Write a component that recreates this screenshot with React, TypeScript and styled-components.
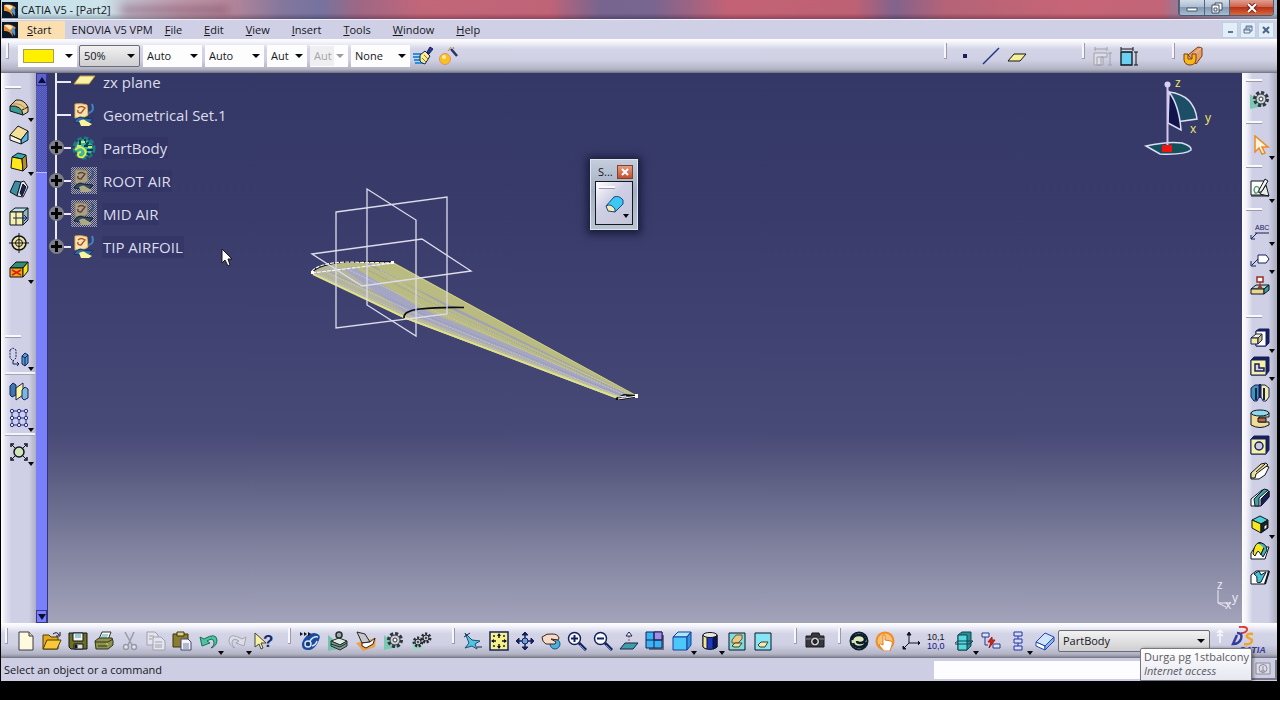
import React from "react";
import styled, { createGlobalStyle, css } from "styled-components";

const Global = createGlobalStyle`
  * { box-sizing: border-box; }
  html, body { margin: 0; background: #fff; }
  body, button, input, select {
    font-family: "Open Sans", "Noto Sans", sans-serif;
    font-size: 11px;
    line-height: 16px;
    color: #16161c;
  }
  button, select, input { margin: 0; padding: 0; border: 0; background: none; border-radius: 0; }
`;

/* ---------- page frame ---------- */

const Page = styled.div`
  min-height: 100vh;
  padding-bottom: 20px;
  display: flex;
`;

const Screen = styled.div`
  flex: 1;
  min-width: 0;
  display: flex;
  flex-direction: column;
  background: #000;
  padding: 0 3px 19px 1px;
`;

const TitleBar = styled.header`
  height: 19px;
  display: flex;
  align-items: center;
  gap: 3px;
  padding-left: 1px;
  background:
    linear-gradient(180deg, rgba(255, 255, 255, 0.15) 0 70%, rgba(60, 60, 80, 0.3) 100%),
    linear-gradient(90deg, #b9dbe6 0, #c3dfe8 8%, #b9b4c4 10%, #b4899c 14%, #a87188 18%, #6f5f8c 22%, #5d5b8e 25%, #8d4d70 28%, #b74b62 33%, #b44860 43%, #5f4a7c 47%, #604a7d 51%, #b9475d 57%, #b2455c 67%, #6d4878 70%, #a8485f 74%, #bd4a5e 84%, #b74a60 91%, #8e5e7c 92%, #96a5bc 100%);
  overflow: hidden;
`;

const TitleText = styled.h1`
  margin: 0;
  flex: 1;
  font-size: 11px;
  font-weight: 400;
  line-height: 16px;
  display: flex;
  gap: 10px;
`;

const GhostTitle = styled.span`
  width: 108px;
  height: 8px;
  margin-top: 4px;
  background: rgba(110, 60, 90, 0.45);
  filter: blur(4px);
`;

const WindowButtons = styled.div`
  align-self: flex-start;
  display: flex;
  margin-right: 3px;
  border: 1px solid #4a5a70;
  border-top: 0;
  border-radius: 0 0 4px 4px;
  overflow: hidden;
`;

const WindowButton = styled.button<{ $close?: boolean }>`
  width: ${(p) => (p.$close ? 44 : 25)}px;
  height: 15px;
  display: grid;
  place-items: center;
  border-left: 1px solid #53657c;
  background: ${(p) =>
    p.$close
      ? "linear-gradient(180deg, #e0a090 0, #cf6450 45%, #b83218 50%, #d8693c 100%)"
      : "linear-gradient(180deg, #d0dbe8 0, #aebfd2 45%, #8499b4 50%, #a6bdd2 100%)"};
`;

const MenuBar = styled.nav`
  height: 20px;
  display: flex;
  align-items: center;
  background: #cfd0e5;
  border-top: 1px solid #eef0f8;
  padding: 0 3px 0 1px;
`;

const MenuItem = styled.button<{ $active?: boolean; $wide?: boolean }>`
  height: 18px;
  padding: ${(p) => (p.$active ? "0 13px 0 9px" : p.$wide ? "0 1px 0 7px" : "0 11px")};
  background: ${(p) => (p.$active ? "#fbdfb0" : "transparent")};
  white-space: nowrap;
  &::first-letter { text-decoration: ${(p) => (p.$wide ? "none" : "underline")}; }
`;

const DocButtons = styled.div`
  margin-left: auto;
  display: flex;
  gap: 2px;
`;

const DocButton = styled.button`
  width: 16px;
  height: 16px;
  display: grid;
  place-items: center;
  background: #e3eef8;
  border: 1px solid #b9d3e6;
`;

/* ---------- tool bars ---------- */

const barPaint = css`
  background: linear-gradient(180deg, #ffffff 0, #f4f4fb 9%, #d3d4e6 30%, #cfd0e3 62%, #b3b4c6 88%, #9c9dab 94%, #6f7080 100%);
`;

const ToolBar = styled.div`
  height: 34px;
  display: flex;
  align-items: center;
  padding-left: 5px;
  ${barPaint}
`;

const BottomBar = styled(ToolBar)`
  height: 35px;
  padding-left: 4px;
`;

const Group = styled.div<{ $lead?: number; $push?: boolean; $tail?: number }>`
  display: flex;
  align-items: center;
  gap: 5px;
  margin-left: ${(p) => (p.$push ? "auto" : `${p.$lead ?? 0}px`)};
  margin-right: ${(p) => p.$tail ?? 0}px;
`;

const Cells = styled.div<{ $inset?: boolean }>`
  display: flex;
  align-items: center;
  padding-left: ${(p) => (p.$inset ? 4 : 0)}px;
`;

const Grip = styled.span`
  width: 3px;
  height: 16px;
  align-self: flex-start;
  background: #f6f6fc;
  border-right: 1px solid #9a9aac;
  border-bottom: 1px solid #9a9aac;
`;

const ToolButton = styled.button<{ $width: number; $height: number }>`
  position: relative;
  flex: none;
  width: ${(p) => p.$width}px;
  height: ${(p) => p.$height}px;
  display: grid;
  place-items: center;
`;

const MenuMark = styled.span`
  position: absolute;
  right: -1px;
  bottom: -1px;
  border: 3px solid transparent;
  border-top: 4px solid #08080c;
  border-bottom: 0;
`;

const Field = styled.label<{ $width: number; $boxed?: boolean; $gap?: number }>`
  display: grid;
  grid-template-columns: 1fr;
  align-items: center;
  width: ${(p) => p.$width}px;
  height: 22px;
  margin-right: ${(p) => p.$gap ?? 3}px;
  background: ${(p) => (p.$boxed ? "linear-gradient(180deg, #f2f2f2, #cfcfd2)" : "#fdfdfe")};
  border: ${(p) => (p.$boxed ? "1px solid #6c6c74" : "0")};
  border-radius: ${(p) => (p.$boxed ? 2 : 0)}px;
  &::after {
    content: "";
    grid-area: 1 / 1;
    justify-self: end;
    margin-right: 4px;
    border: 4px solid transparent;
    border-top-color: #08080c;
    border-bottom: 0;
    pointer-events: none;
  }
  &:has(:disabled)::after { border-top-color: #9c9ca4; }
`;

const Select = styled.select`
  grid-area: 1 / 1;
  appearance: none;
  width: calc(100% - 14px);
  height: 20px;
  padding-left: 4px;
  outline: none;
  text-overflow: clip;
  &:disabled { color: #a4a4ac; background: #efeff2; opacity: 1; }
`;

const Swatch = styled.button`
  grid-area: 1 / 1;
  width: 31px;
  height: 14px;
  margin-left: 5px;
  background: #fff000;
  border: 1px solid #a8a04a;
`;

/* ---------- work area ---------- */

const Work = styled.main`
  flex: 1;
  display: flex;
  min-height: 0;
`;

const SideBar = styled.div<{ $right?: boolean }>`
  flex: none;
  width: 35px;
  display: flex;
  flex-direction: column;
  align-items: flex-start;
  padding: ${(p) => (p.$right ? "6px 0 0 4px" : "13px 0 0 4px")};
  background: ${(p) =>
    p.$right
      ? "linear-gradient(90deg, #fff 0, #f0f0f8 14%, #cfd0e5 30%, #cfd0e5 75%, #a9aabd 100%)"
      : "linear-gradient(90deg, #fff 0, #e4e4f1 14%, #cfd0e5 30%, #cfd0e5 80%, #aeafc2 100%)"};
`;

const SideGrip = styled.span<{ $lead?: number; $after?: number }>`
  width: 16px;
  height: 3px;
  margin: ${(p) => p.$lead ?? 0}px 0 ${(p) => p.$after ?? 5}px;
  background: #fafafd;
  border-bottom: 1px solid #9a9aac;
`;

const SideRule = styled.span`
  width: 30px;
  height: 3px;
  margin: 2px 0;
  background: #f3f3fa;
  border-bottom: 1px solid #a5a5b8;
`;

const ScrollBar = styled.div`
  flex: none;
  width: 12px;
  display: flex;
  flex-direction: column;
  background: #7a80fb;
  border-right: 1px solid #30347c;
`;

const ScrollButton = styled.button<{ $end?: boolean }>`
  height: 13px;
  margin-top: ${(p) => (p.$end ? "auto" : 0)};
  display: grid;
  place-items: center;
  background: ${(p) => (p.$end ? "#7a80fb" : "#5c61cf")};
  border: 1px solid #34388c;
`;

const Thumb = styled.div`
  height: 87px;
  background: repeating-conic-gradient(#4c51ad 0 25%, #5f65cd 0 50%) 0 0 / 2px 2px;
  border-bottom: 1px solid #b9bcff;
`;

const Canvas = styled.section`
  position: relative;
  flex: 1;
  min-width: 0;
  overflow: hidden;
  background: linear-gradient(180deg, #343866 0, #393c6a 25%, #414372 50%, #474976 65%, #5a5c82 73%, #7c7e9b 85%, #a3a4ba 100%);
`;

/* ---------- specification tree ---------- */

const Tree = styled.ul`
  margin: -8px 0 0;
  padding: 0;
  list-style: none;
`;

const Node = styled.li`
  height: 33px;
  display: flex;
  align-items: center;
  &:last-child > span:first-child { background-size: 2px 50%; }
`;

const Spine = styled.span`
  width: 16px;
  height: 100%;
  display: grid;
  place-items: center;
  background: linear-gradient(#e8e8f6, #e8e8f6) top center / 2px 100% no-repeat;
`;

const Toggle = styled.button`
  width: 15px;
  height: 15px;
  display: grid;
  place-items: center;
  border-radius: 50%;
  background: #7e7f86;
`;

const Stub = styled.span<{ $long?: boolean }>`
  width: ${(p) => (p.$long ? 14 : 7)}px;
  height: 2px;
  margin-left: ${(p) => (p.$long ? -7 : 0)}px;
  background: #e8e8f6;
`;

const NodeIcon = styled.span<{ $dim?: boolean }>`
  width: 26px;
  height: 27px;
  display: grid;
  place-items: center;
  background: ${(p) => (p.$dim ? "repeating-conic-gradient(#a2a3b6 0 25%, #3a3d66 0 50%) 0 0 / 2px 2px" : "none")};
  svg { filter: ${(p) => (p.$dim ? "brightness(0.7) saturate(0.6)" : "none")}; }
`;

const NodeLabel = styled.span<{ $shade?: boolean }>`
  margin-left: 5px;
  padding: 0 1px;
  font-size: 15px;
  line-height: 22px;
  color: #dcdcea;
  background: ${(p) => (p.$shade ? "rgba(44, 47, 98, 0.45)" : "none")};
`;

/* ---------- objects floating on the canvas ---------- */

const Model = styled.svg`
  position: absolute;
  left: 250px;
  top: 107px;
`;

const Compass = styled.svg`
  position: absolute;
  right: 22px;
  top: 0;
`;

const Axes = styled.svg`
  position: absolute;
  right: 0;
  bottom: 10px;
`;

const Pointer = styled.svg`
  position: absolute;
  left: 173px;
  top: 175px;
`;

const Palette = styled.div`
  position: absolute;
  left: 542px;
  top: 86px;
  width: 48px;
  padding: 3px 4px 4px;
  background: linear-gradient(180deg, #c3cddb 0, #a3afc4 45%, #b8c6d2 100%);
  border: 1px solid #dfe6ee;
  box-shadow: 0 1px 8px 3px rgba(16, 18, 46, 0.8);
`;

const PaletteTitle = styled.div`
  height: 18px;
  display: flex;
  align-items: center;
  justify-content: space-between;
  padding-left: 3px;
`;

const PaletteClose = styled.button`
  width: 16px;
  height: 14px;
  display: grid;
  place-items: center;
  background: linear-gradient(180deg, #e79a80, #c4502c);
  border: 1px solid #7c4234;
`;

const PaletteBody = styled.div`
  height: 44px;
  display: flex;
  flex-direction: column;
  align-items: center;
  padding: 4px 3px;
  border: 1px solid #16161c;
  background: linear-gradient(135deg, #fff, #cfd0e5 40%, #c3c4d8);
`;

const PaletteGrip = styled(SideGrip)`
  align-self: flex-start;
`;

/* ---------- bottom ---------- */

const Logo = styled.svg`
  margin-left: auto;
  margin-right: 4px;
  flex: none;
`;

const Status = styled.footer`
  position: relative;
  height: 23px;
  display: flex;
  align-items: center;
  padding-left: 3px;
  background: #cdcee3;
`;

const CommandLine = styled.input`
  width: 234px;
  height: 18px;
  margin-left: auto;
  background: #fdfdff;
`;

const StatusButton = styled.button`
  width: 26px;
  height: 20px;
  margin-left: 83px;
  display: grid;
  place-items: center;
  border-right: 2px solid #77788a;
  border-bottom: 2px solid #77788a;
`;

const Tip = styled.div`
  position: absolute;
  right: 25px;
  bottom: 0;
  padding: 1px 2px 0 3px;
  line-height: 14px;
  height: 33px;
  width: 112px;
  white-space: nowrap;
  color: #5a5a62;
  background: linear-gradient(180deg, #fff, #e6e7f1);
  border: 1px solid #77777f;
  border-radius: 2px 2px 0 0;
  box-shadow: 2px 0 3px rgba(0, 0, 0, 0.35);
  em { display: block; }
`;

/* ---------- drawings ---------- */

const K = "#10141c";
const N = "#17205c";

const art: Record<string, React.ReactNode> = {
  fillet: <g stroke={K}><path d="M1 8 7 2q8-1 12 7v5l-5 3z" fill="#e8c98c" /><path d="M1 8q12-1 13 9L1 13z" fill="#3c9a90" /><path d="M13 12l6-3" /><path d="M4 6q9-1 12 5" stroke="#b88a58" fill="none" /></g>,
  chamfer: <g stroke={K}><path d="M1 10 9 1l10 5-7 9z" fill="#f5e09a" /><path d="M12 15l7-9v9l-7 4z" fill="#57b4e0" /><path d="M1 10v5l11 4v-4z" fill="#f8f4dc" /></g>,
  draft: <g stroke={K}><path d="M3 5 9 1l8 2-4 4z" fill="#35a8b0" /><path d="M3 5l10 2 1 12-12-3z" fill="#ffe81c" /><path d="M13 7l4-4 1 12-4 4z" fill="#b88e20" /></g>,
  shell: <g stroke={K}><path d="M1 13 6 2l6 1-4 14z" fill="#3a90a0" /><path d="M8 17 12 3l3-1 4 6-5 10z" fill="#e8e8f0" /><path d="M11 14l3-9 3 3-4 9z" fill={N} /></g>,
  thickness: <g stroke={K}><path d="M1 6l5-4h13l-5 4z" fill="#bfe0e8" /><path d="M1 6h13v13H1z" fill="#f6f0a8" /><path d="M14 6l5-4v12l-5 5z" fill="#8fb8c8" /><path d="M7 6v13M4 12h14m-3-3 3 3-3 3" fill="none" stroke={N} /></g>,
  thread: <g fill="none" stroke={K}><circle cx="10" cy="10" r="7" fill="#f6e6a0" strokeWidth="1.5" /><circle cx="10" cy="10" r="3.5" /><path d="M10 0v20M0 10h20" /></g>,
  replace: <g stroke={K}><path d="M1 8l6-6h12l-5 6z" fill="#2f8f70" /><path d="M1 8h13v9H1z" fill="#f5a41c" /><path d="M14 8l5-6v9l-5 6z" fill="#f5e41c" /><path d="M3 10l9 5m0-5-9 5" stroke="#d02010" strokeWidth="1.500" /></g>,
  translate: <g stroke={N}><path d="M1 3l3-2 3 2v8l-3 3-3-3z" fill="none" strokeDasharray="2 1" /><path d="M4 14v3h6m-2-2 2 2-2 2" fill="none" /><path d="M13 9l3-3 3 2v8l-3 3-3-2z" fill="#4fa0d0" /><path d="M13 9l3 2 3-3m-3 3v8" fill="none" /></g>,
  mirror: <g stroke={N}><path d="M1 5l3-3 3 2v10l-4 2-2-2z" fill="#3c78a8" /><path d="M7 7l7-5v12l-7 5z" fill="#f8f49c" /><path d="M13 9l3-3 3 2v9l-4 2-2-2z" fill="#7cb8dc" /></g>,
  pattern: <g stroke="#28308c" fill="#dfe6ff"><path d="M3 3h14v14H3zM3 10h14M10 3v14" fill="none" />{[3, 10, 17].map((x) => [3, 10, 17].map((y) => <circle key={`${x}${y}`} cx={x} cy={y} r="1.7" />))}</g>,
  scale: <g stroke={K}><path d="M3 3l14 14M17 3 3 17" /><circle cx="10" cy="10" r="5" fill="#cfe6b8" strokeWidth="1.5" /><path d="M2 5V2h3M15 2h3v3M18 15v3h-3M5 18H2v-3" fill="none" strokeWidth="1.5" /></g>,
  gearLeaf: <g><path d="M0 4v15l14-3z" fill="#7cc8b4" /><circle cx="11" cy="9" r="6.5" fill="none" stroke="#30343c" strokeWidth="3" strokeDasharray="3 2" /><circle cx="11" cy="9" r="5" fill="#d0d4d8" stroke="#30343c" /><circle cx="11" cy="9" r="2" fill="#fff" stroke="#30343c" /></g>,
  gears: <g><path d="M1 8v12l11-3z" fill="#a2d4c6" />{[[6, 11, 4], [14, 7, 4]].map(([x, y, r]) => <g key={x}><circle cx={x} cy={y} r={r} fill="none" stroke="#262a30" strokeWidth="3" strokeDasharray="2 1.5" /><circle cx={x} cy={y} r="3" fill="#c0c4c8" stroke="#262a30" /><circle cx={x} cy={y} r="1" fill="#262a30" /></g>)}</g>,
  select: <path d="M5 1v16l4-4 3 6 3-1-3-6h6z" fill="#fff4dc" stroke="#e88a28" strokeWidth="1.5" />,
  sketch: <g stroke={K}><path d="M1 3h13v14H1z" fill="#fff" /><path d="M1 18h18M14 17l-4-1 6-9 3 11z" fill="#e8eee8" /><path d="M4 12q1-5 4-3t0 5-4-2z" fill="none" stroke="#5aa070" strokeWidth="1.500" /><path d="M9 12 15 1l3 2-6 10-3 2z" fill="#f4f4f4" /></g>,
  flagText: <g stroke={N}><path d="M5 12h14M7 12l-6 6m0-4v4h4" fill="none" /><text x="5" y="9" fontSize="7" fontFamily="Liberation Sans" stroke="none" fill={N}>ABC</text></g>,
  flagNote: <g stroke={N}><path d="M8 6h8l3 4-3 4H8z" fill="#fff" /><path d="M8 10l-6 6m-1-4v5h5" fill="none" /></g>,
  datum: <g stroke={K}><path d="M1 13l5-4h13l-5 4z" fill="#a8dce0" /><path d="M1 13h13v5H1z" fill="#e8d890" /><path d="M14 13l5-4v5l-5 4z" fill="#3ca0a0" /><path d="M7 1h6v5H7z" fill="#fff" stroke="#9c2c20" strokeWidth="1.5" /><path d="M10 6v5M8 12l2-3 2 3z" fill="#d03020" stroke="#9c2c20" /></g>,
  pad: <g stroke={N}><path d="M6 3l3-2h10v14l-3 3H6z" fill={N} /><path d="M6 3h10v15H6z" fill="#fff" /><path d="M1 10l5-4h6l-4 4z" fill="#fff8b0" /><path d="M1 10h7v6H1z" fill="#f3ee9c" /><path d="M8 10l4-4v6l-4 4z" fill="#c8c078" /></g>,
  pocket: <g stroke={N}><path d="M1 4l3-3h15v14l-3 4H1z" fill={N} /><path d="M1 4h15v15H1z" fill="#f7f1a6" /><path d="M5 8h4v4h5v3H5z" fill="#d6d6e2" strokeWidth="1.5" /></g>,
  shaft: <g stroke={N}><path d="M1 5l4-3h4v12l-2 4H4l-3-4z" fill="#3f95b4" /><path d="M19 5l-4-3h-4v12l2 4h3l3-4z" fill="#f4eea0" /><path d="M6 5v12M14 5v12M10 1v14" strokeWidth="2" /></g>,
  groove: <g stroke={K}><path d="M1 4v12q9 5 18 0v-3H9V8h10V4z" fill="#f0dc98" /><ellipse cx="10" cy="4" rx="9" ry="3" fill="#8cd8f0" /><path d="M8 9h8v4H8z" fill="#b86c48" /></g>,
  hole: <g stroke={N}><path d="M1 4l3-3h15v14l-3 4H1z" fill={N} /><path d="M1 4h15v15H1z" fill="#f7f1a6" /><circle cx="9" cy="11" r="4" fill="#c8ccde" strokeWidth="1.5" /></g>,
  rib: <g stroke={K}><path d="M1 12l3 1 11-8 4 1-4 8-6 4H1z" fill="#fff" /><path d="M1 12 11 3l5-1 2 2-12 9-1 4H1z" fill="#e8e09c" /><path d="M6 11l9-8" /></g>,
  slot: <g stroke={K}><path d="M1 12 12 3l7 1v6l-8 9H1z" fill="#fff" /><path d="M4 12 14 2l4 1-9 8v8H5z" fill="#40a0a8" /><path d="M11 19v-7l8-8v6z" fill={N} /></g>,
  stiffener: <g stroke={K}><path d="M2 6l8-4 8 4-7 4z" fill="#4cd0d8" /><path d="M2 6l9 4v9l-9-5z" fill="#f7e71f" /><path d="M11 10l7-4v8l-7 5z" fill="#1c2420" /><path d="M14 12l3-2v4l-3 2z" fill="#fff" /></g>,
  loft: <g stroke={K}><path d="M1 12l4-6h14l-4 12H1z" fill="#fff" /><path d="M3 13q1-9 5-11t6 4l-3 8q-2-5-4-3l-2 4z" fill="#f3e820" /><path d="M8 2q8-1 9 7l-4 7-2-3 3-6" fill="#46b4b4" /></g>,
  loftCut: <g stroke={K}><path d="M1 8l5-4h13l-4 13H1z" fill="#fff" /><path d="M4 7q4 2 3 6t4 2l5-10-5 3-2-4z" fill="#44c4dc" /><path d="M15 17l4-13" strokeWidth="2" /></g>,

  fileNew: <g stroke="#3c3c44"><path d="M3 1h10l4 4v14H3z" fill="#fdfae0" /><path d="M13 1v4h4" fill="#dcd8b0" /></g>,
  open: <g stroke="#4c3c08"><path d="M1 4h6l2 2h7v12H1z" fill="#e8a818" /><path d="M1 18l4-9h14l-4 9z" fill="#f8c838" /><path d="M11 3q4-3 6 1m1-3v4h-4" fill="none" stroke={K} /></g>,
  save: <g stroke={K}><path d="M1 2h18v16H3l-2-2z" fill="#6c7020" /><path d="M5 2h10v8H5z" fill="#f4f4f4" /><path d="M6 13h9v5H6z" fill="#dcdcdc" /><path d="M7 4h6M7 6h6" stroke="#44a0b4" /><path d="M7 14h2v3H7z" fill={K} /></g>,
  print: <g stroke="#30341c"><path d="M5 8 8 1h9l-3 8z" fill="#fff" /><path d="M8 4h6M7 6h6" stroke="#48a0c0" /><path d="M1 10l4-3h13l1 3v4l-5 4H2z" fill="#8e9450" /><path d="M1 11h13l5-3M4 15h9" fill="none" /><path d="M12 13h2" stroke="#ffe81c" /></g>,
  cut: <g stroke="#9a9aa6" fill="none" strokeWidth="1.5"><path d="M5 1l7 13M14 1 8 14" /><circle cx="6" cy="16" r="2.5" fill="#e6e6ee" /><circle cx="14" cy="16" r="2.5" fill="#e6e6ee" /></g>,
  copy: <g stroke="#a0a0ac" fill="#e4e4ee"><path d="M1 1h8l3 3v10H1z" /><path d="M7 6h8l4 4v9H7z" /><path d="M9 11h7M9 14h7M9 16h7M3 5h5M3 8h3" /></g>,
  paste: <g stroke="#38340c"><path d="M1 3h15v13H1z" fill="#8c7c30" /><path d="M5 1h7v4H5z" fill="#d8d088" /><path d="M9 8h7l3 3v8H9z" fill="#f4f4ff" stroke="#40446c" /><path d="M11 13h6M11 15h6M11 17h6" stroke="#7478a0" /></g>,
  undo: <path d="M1 6l2 9 8-3-3-2q6-4 7 1 1 3-3 6 6-2 6-8Q17 1 5 8z" fill="#4cc4a0" stroke="#1c6c58" />,
  redo: <path d="M19 6l-2 9-8-3 3-2Q6 6 5 11q-1 3 3 6-6-2-6-8Q3 1 15 8z" fill="#dedee8" stroke="#a4a4b0" />,
  help: <g><path d="M1 2v14l4-3 2 5 2-1-2-5h5z" fill="#f7f2a0" stroke="#444" /><text x="9" y="16" fontSize="17" fontWeight="700" fontFamily="Liberation Sans" fill="#122c6c">?</text></g>,
  enovia: <g><path d="M2 12Q6 2 14 2q8 1 5 7-3 8-9 10-9 1-8-7z" fill="#1c4a9c" /><circle cx="8" cy="13" r="3" stroke="#d8e4f4" strokeWidth="1.500" fill="#14387c" /><path d="M10 10q3-5 8-4M12 15q4-1 5-5" stroke="#d8e4f4" strokeWidth="1.500" fill="none" /><path d="M0 1l3 2-3 2zM4 1l3 2-3 2zM8 1l3 2-3 2z" fill={K} /></g>,
  catalog: <g stroke="#20302c"><path d="M0 4v16l16-3z" fill="#78c0ac" stroke="none" /><path d="M3 10l8-3 8 3-7 4z" fill="#e0e8e4" /><path d="M3 10v5l9 4 7-4v-5l-7 4z" fill="#7c988c" /><path d="M3 13l9 3 7-4" fill="none" /><circle cx="11" cy="4" r="3" fill="#a0a8a8" strokeWidth="1.5" /></g>,
  box: <g stroke="#2c2420"><path d="M0 12l7 8 12-4 1-9z" fill="#f0a048" stroke="none" /><path d="M1 1l8 2 5 8-8 1z" fill="#c8c8cc" /><path d="M6 12l8-1 5-4-2 6-7 4-4-2z" fill="#fff" /></g>,
  fly: <g stroke="#1c5070" fill="#54c4e4"><path d="M2 2l7 7 8 1-5 3 2 5-5-3-7 2 4-5z" /><path d="M1 6l6-4M14 16h5" stroke={N} /></g>,
  fit: <g><path d="M1 1h18v18H1z" fill="#f4f08c" stroke={N} strokeWidth="1.5" /><path d="M10 3v4M10 17v-4M3 10h4M17 10h-4" stroke={K} strokeWidth="1.500" /><path d="M8 5l2-3 2 3zM8 15l2 3 2-3zM5 8l-3 2 3 2zM15 8l3 2-3 2z" fill={K} /><path d="M4 4h2v2H4zM14 4h2v2h-2zM4 14h2v2H4zM14 14h2v2h-2z" fill="#54543c" /></g>,
  pan: <g stroke={N} fill={N}><path d="M10 1v18M1 10h18" strokeWidth="1.5" /><path d="M7 4l3-3 3 3zM7 16l3 3 3-3zM4 7l-3 3 3 3zM16 7l3 3-3 3z" /><circle cx="10" cy="10" r="3" fill="#6ca0d8" /></g>,
  rotate: <g stroke="#3c241c"><circle cx="14" cy="13" r="5" fill="#4cb0dc" stroke="#1c5080" /><path d="M1 6q5-4 10-3 6 0 7 4l-1 2-7-1 5 3-1 2H5q-4-2-4-7z" fill="#f6dcc8" /></g>,
  zoomIn: <g stroke={N}><circle cx="7.500" cy="7.500" r="6" fill="#f6fbff" strokeWidth="1.500" /><path d="M12 12l7 7" strokeWidth="3" /><path d="M13 14l5 5" stroke="#5c90c0" /><path d="M4 7.500h7M7.500 4v7" strokeWidth="2" /></g>,
  zoomOut: <g stroke={N}><circle cx="7.500" cy="7.500" r="6" fill="#f6fbff" strokeWidth="1.500" /><path d="M12 12l7 7" strokeWidth="3" /><path d="M13 14l5 5" stroke="#5c90c0" /><path d="M4 7.500h7" strokeWidth="2" /></g>,
  normal: <g stroke={N}><path d="M1 18l5-6h13l-5 6z" fill="#3fa0a4" /><path d="M10 13V4" strokeDasharray="2 1" stroke="#a04838" /><path d="M7 5l3-4 3 4z" fill="#fff" /></g>,
  multi: <g stroke={N}><path d="M4 4h15v15H4z" fill="#6c6c80" stroke="none" /><path d="M1 1h16v16H1z" fill="#38b4f0" /><path d="M9 1h8v8H9z" fill="#a48ce0" /><path d="M9 1v16M1 9h16" /></g>,
  iso: <g stroke="#1c3c9c"><path d="M1 6l5-5h13l-4 5z" fill="#a8e8fc" /><path d="M1 6h14v13H1z" fill="#4cc8f8" /><path d="M15 6l4-5v13l-4 5z" fill="#2898e0" /></g>,
  shading: <g stroke={K}><path d="M3 4v12q7 5 14 0V4z" fill="#1c38c8" /><path d="M3 4v12q2 2 4 2V5z" fill="#f0e898" /><path d="M13 5v13q3-1 4-2V4z" fill="#0c1468" /><ellipse cx="10" cy="4" rx="7" ry="2.500" fill="#e8e8e0" /></g>,
  hideShow: <g stroke={K}><path d="M2 2h16v17H2z" fill="#7cdce4" /><path d="M5 9l4-5h6v4l-4 4H5z" fill="#e8c888" stroke="#6c5430" /><path d="M5 15l3-3h7l-3 4H7z" fill="#e8e098" stroke="#44401c" /></g>,
  swap: <g stroke={K}><path d="M2 2h16v17H2z" fill="#84e4f8" /><path d="M5 14l3-3h7l-3 5H7z" fill="#f0e8b8" stroke="#44401c" /></g>,
  camera: <g stroke="#18181c"><path d="M1 5h5l1-3h7l1 3h4v11H1z" fill="#38383e" /><path d="M1 8h18" stroke="#8c8c94" /><circle cx="10" cy="10.500" r="4.500" fill="#d0d0d8" /><circle cx="10" cy="10.500" r="2" fill="#28282c" /></g>,
  update: <g fill="none" stroke="#0c1c2c"><circle cx="10" cy="10" r="8.500" fill="#dce8b8" strokeWidth="2" /><path d="M3 9q1-5 7-5 5 0 6 4 0 4-5 4-3 0-3-2M17 11q-1 5-7 5-5 0-6-4" strokeWidth="2.500" /></g>,
  manual: <g><circle cx="10" cy="10" r="8.500" fill="#f8c078" stroke="#f08c20" strokeWidth="2" /><path d="M8 4q2-1 2 1v4l6 1q2 1 1 4l-2 6H9l-5-6q1-2 4 0z" fill="#fff" stroke="#e08020" /></g>,
  axis: <g stroke={K} fill={K}><path d="M8 2v10h11M8 12l-6 6" fill="none" /><path d="M6 4l2-3 2 3zM17 10l2 2-2 2M2 15v3h3z" /></g>,
  mean: <g fontFamily="Liberation Sans" fontSize="9" fill={K}><text x="0" y="9">10,1</text><text x="0" y="18" fill="#14148c">10,0</text></g>,
  cutPart: <g stroke="#0c4450"><path d="M4 4l4-3h9v14l-4 4H4z" fill="#2c8c94" /><path d="M4 4h9v15H4z" fill="#58d8dc" /><path d="M1 12l3-2h15l-3 3H1" fill="none" /></g>,
  link: <g stroke="#28388c"><path d="M1 2h7v4H1z" fill="#dce4fc" /><path d="M12 13h7v4h-7z" fill="#dce4fc" /><path d="M4 6v8h3" fill="none" /><path d="M11 6l-4 5h3l-2 6 6-8h-3z" fill="#d82418" stroke="#a81810" /></g>,
  stack: <g stroke="#2434a0" fill="#d4dcfc"><path d="M6 1h8v4H6zM6 8h8v4H6zM6 15h8v4H6zM10 5v3M10 12v3" /></g>,
  book: <g stroke="#2444b0"><path d="M1 11l9-9 9 4-9 9z" fill="#d0e4fc" /><path d="M1 11v4l9 4v-4z" fill="#fff" /><path d="M10 15v4l9-9V6z" fill="#8cb8e8" /></g>,

  brush: <g stroke={N}><path d="M0 8h10M0 11h9M1 14h8M2 17h9" stroke="#2c90d8" strokeWidth="2" /><path d="M7 9l5-4 5 5-5 8q-4-1-5-3z" fill="#f7ec90" /><path d="M9 12l4 4M11 9l4 4" stroke="#8c7c30" /><path d="M14 6l3-5 3 2-4 5z" fill="#28388c" /></g>,
  wizard: <g><circle cx="6" cy="13" r="5.500" fill="#f8c020" stroke="#e88c6c" /><circle cx="5" cy="11" r="2" fill="#fff29a" /><path d="M12 3l6 7" stroke="#28306c" strokeWidth="2.500" /><path d="M9 5l3-4M14 1l1 2" stroke="#b48830" /></g>,
  point: <path d="M8 8h4v4H8z" fill={N} />,
  line: <path d="M2 18 18 2" stroke="#1c3484" strokeWidth="1.500" />,
  plane: <path d="M1 15l6-7h12l-6 7z" fill="#f8f094" stroke={K} />,
  dimOff: <g stroke="#a0a0aa" fill="#dedee8"><path d="M2 3h12M2 1v4M14 1v4" fill="none" /><path d="M1 7h13v4H8v8H1zM4 11h6v8H4z" /><path d="M17 7v12M15 7h4M15 19h4" fill="none" /></g>,
  dim: <g stroke={K}><path d="M2 3h12M2 1v4M14 1v4M17 6v13M15 6h4M15 19h4" fill="none" /><path d="M2 6h11v13H2z" fill="#6cd0f0" strokeWidth="1.300" /></g>,
  stock: <g stroke="#7c3c10"><path d="M5 9l10-8 4 1v8l-6 8z" fill="#e4a070" /><path d="M9 10l9-8" stroke="#f4c8a0" /><path d="M1 8h4v5h4V8h4v6q-1 5-6 5t-6-5z" fill="#f8b818" /></g>,
  thickSurface: <g stroke="#14487c"><path d="M2 12 10 3q5-2 9 3v4l-8 8z" fill="#3cc8f4" /><path d="M2 12q5-3 9 3v3L4 17z" fill="#f7eab0" /></g>,
};

const treeArt: Record<string, React.ReactNode> = {
  plane: <path d="M2 14 8 6h15l-6 8z" fill="#f7f2a8" stroke="#c09a30" />,
  geoset: (
    <g>
      <path d="M3 1q7-1 12 1l1 10q-3 3-8 2l-5 1z" fill="#f6e4b0" stroke="#e2b04c" />
      <path d="M6 5q3-3 7 0l-4 5q-4 0-3-3" fill="none" stroke="#b0502c" strokeWidth="1.500" />
      <path d="M20 1q3 7-3 9" fill="none" stroke="#3c84c8" strokeWidth="2" />
      <path d="M2 19q5-7 9-4l10 1-4 4q-6-3-9 0z" fill="#2f6ea4" stroke="#16306c" />
      <path d="M7 18q5-3 7 0l6 3-3 2H9z" fill="#fbf49c" />
    </g>
  ),
  body: (
    <g>
      <circle cx="12" cy="12" r="9" fill="#37b2a0" stroke="#1c7c84" strokeWidth="5" strokeDasharray="4 2" />
      <circle cx="12" cy="12" r="8" fill="#3cb8a0" />
      <path d="M8 4v5M13 3v4M17 6l-3 3M12 10h8M15 14h6M14 17l4 2" stroke="#0c3c54" strokeWidth="2" />
      <path d="M3 14q5-5 9-1t-1 8q-4 1-5-2 0-3 3-3" fill="none" stroke="#e4ea48" strokeWidth="2" />
      <path d="M9 6h4M16 11h4M5 10h4" stroke="#c8ec70" strokeWidth="2" />
    </g>
  ),
};

const AppBadge = () => (
  <svg width="16" height="16" viewBox="0 0 16 16" aria-hidden="true">
    <path d="M0 0h16v16H0z" fill="#0c1828" />
    <path d="M2 3q8-2 12 3l-4 3 1 6Q8 8 2 9z" fill="#e88c34" />
    <path d="M2 3q6-1 9 2l-3 3z" fill="#fbe8b4" />
    <path d="M11 5q3 2 2 9l-4-5z" fill="#4894d4" />
  </svg>
);

type Tool = { id: string; label: string; menu?: boolean };
const t = (id: string, label: string, menu = false): Tool => ({ id, label, menu });

type Placement = "bar" | "wideBar" | "left" | "right";

const cellSize = (place: Placement, menu?: boolean): [number, number] => {
  if (place === "left") return [28, 27];
  if (place === "right") return [28, menu ? 28 : 26];
  if (place === "wideBar") return [28, 26];
  return [menu ? 28 : 26, 26];
};

const Tools = ({ items, place = "bar" }: { items: Tool[]; place?: Placement }) => (
  <>
    {items.map((i) => {
      const [w, h] = cellSize(place, i.menu);
      return (
        <ToolButton key={i.id} aria-label={i.label} title={i.label} $width={w} $height={h}>
          <svg width="20" height="20" viewBox="0 0 20 20" fill="none" aria-hidden="true">
            {art[i.id]}
          </svg>
          {i.menu && <MenuMark />}
        </ToolButton>
      );
    })}
  </>
);

const Combo = ({ label, value, width, boxed, disabled, gap }: { label: string; value: string; width: number; boxed?: boolean; disabled?: boolean; gap?: number }) => (
  <Field $width={width} $boxed={boxed} $gap={gap}>
    <Select aria-label={label} disabled={disabled} defaultValue={value}>
      <option>{value}</option>
    </Select>
  </Field>
);

const dressUp = [t("fillet", "Edge Fillet", true), t("chamfer", "Chamfer"), t("draft", "Draft Angle", true), t("shell", "Shell"), t("thickness", "Thickness"), t("thread", "Thread"), t("replace", "Replace Face", true)];
const sketchBased = [t("pad", "Pad", true), t("pocket", "Pocket", true), t("shaft", "Shaft"), t("groove", "Groove"), t("hole", "Hole"), t("rib", "Rib"), t("slot", "Slot"), t("stiffener", "Stiffener", true), t("loft", "Multi-sections Solid"), t("loftCut", "Removed Multi-sections Solid")];

const nodes = [
  { name: "zx plane", icon: "plane" },
  { name: "Geometrical Set.1", icon: "geoset" },
  { name: "PartBody", icon: "body", open: true },
  { name: "ROOT AIR", icon: "geoset", open: true, dim: true },
  { name: "MID AIR", icon: "geoset", open: true, dim: true },
  { name: "TIP AIRFOIL", icon: "geoset", open: true },
];

const Wing = () => (
  <Model width="350" height="230" viewBox="298 180 350 230" fill="none" role="img" aria-label="Wing surface with reference planes">
    <path d="M312 273Q320 263 345 262L393 262 637 396 618 399 406 319z" fill="#b9bb80" />
    <path d="M312 273Q318 266 335 264L404 308 630 397 618 399 406 319z" fill="#b4b59c" />
    <path d="M342 268 354 267 420 308 632 396 626 398 404 312z" fill="#a5a6c4" />
    <path d="M366 264 370 264 455 311 634 396z" fill="#a0a1b4" />
    <path d="M318 274 408 316 622 398M326 272 412 312 624 398M345 268 430 309 630 397M380 270 440 308 634 396" stroke="#c6c7bc" strokeDasharray="2 1" />
    <path d="M330 272 420 313 628 398M360 266 450 312 632 397" stroke="#9496b4" strokeDasharray="1 1" />
    <path d="M313 274 406 318 618 398" stroke="#dfe18c" strokeWidth="2" />
    <path d="M393 263 637 396" stroke="#cdd082" />
    <path d="M312 272Q320 264 345 262L393 262" stroke="#0c0c10" strokeWidth="1.300" />
    <path d="M312 271Q320 263 345 262L393 263M312 273 393 263" stroke="#f4f4fa" strokeWidth="1.200" strokeDasharray="4 1" />
    <path d="M404 318Q403 311 420 309T464 307.500" stroke="#0c0c10" strokeWidth="1.700" />
    <path d="M616 399 624 395 637 396 621 399z" stroke="#0c0c10" strokeWidth="2" />
    <path d="M618 399 637 396M618 397 626 396" stroke="#fff" />
    <path d="M391 261h3v3h-3zM635 394h3v4h-3zM311 271h3v3h-3z" fill="#fff" />
    <g stroke="#dcdcec" strokeWidth="1.300">
      <path d="M336 212 447 197V314L336 328z" />
      <path d="M367 189 416 220V336L367 305z" />
      <path d="M312 254 422 239 471 271 362 286z" />
    </g>
  </Model>
);

export default function App() {
  return (
    <>
      <Global />
      <Page>
        <Screen>
          <TitleBar>
            <AppBadge />
            <TitleText>
              CATIA V5 - [Part2]
              <GhostTitle />
            </TitleText>
            <WindowButtons>
              <WindowButton aria-label="Minimize">
                <svg width="12" height="10"><path d="M1 5h10v3H1z" fill="#fff" stroke="#46566c" /></svg>
              </WindowButton>
              <WindowButton aria-label="Restore">
                <svg width="12" height="12" fill="#fff" stroke="#3c4c60"><path d="M4 1h7v7H4z" /><path d="M1 3h7v8H1z" /><path d="M3 6h3v3H3z" /></svg>
              </WindowButton>
              <WindowButton $close aria-label="Close">
                <svg width="12" height="10"><path d="M2 1l8 8M10 1 2 9" stroke="#70281c" strokeWidth="4" /><path d="M2 1l8 8M10 1 2 9" stroke="#fff" strokeWidth="2" /></svg>
              </WindowButton>
            </WindowButtons>
          </TitleBar>

          <MenuBar>
            <AppBadge />
            <MenuItem $active>Start</MenuItem>
            <MenuItem $wide>ENOVIA V5 VPM</MenuItem>
            {["File", "Edit", "View", "Insert", "Tools", "Window", "Help"].map((m) => (
              <MenuItem key={m}>{m}</MenuItem>
            ))}
            <DocButtons>
              <DocButton aria-label="Minimize document">
                <svg width="8" height="8"><path d="M2 6h5" stroke="#5c7494" strokeWidth="2" /></svg>
              </DocButton>
              <DocButton aria-label="Restore document">
                <svg width="10" height="10" fill="none" stroke="#5c7494"><path d="M3 4V1h6v5H7M1 4h6v4H1zM1 5h6M3 2h6" /></svg>
              </DocButton>
              <DocButton aria-label="Close document">
                <svg width="8" height="8"><path d="M1 1l6 6M7 1 1 7" stroke="#4c6484" strokeWidth="2" /></svg>
              </DocButton>
            </DocButtons>
          </MenuBar>

          <ToolBar>
            <Group>
              <Grip />
              <Cells $inset>
                <Field $width={59} $gap={2}>
                  <Swatch aria-label="Fill colour" />
                </Field>
                <Combo label="Transparency" value="50%" width={61} boxed />
                <Combo label="Line thickness" value="Auto" width={59} />
                <Combo label="Line type" value="Auto" width={59} />
                <Combo label="Point symbol" value="Aut" width={40} />
                <Combo label="Rendering style" value="Aut" width={38} disabled />
                <Combo label="Layer" value="None" width={59} gap={0} />
                <Tools items={[t("brush", "Painter"), t("wizard", "Wizard")]} />
              </Cells>
            </Group>
            <Group $push>
              <Grip />
              <Cells><Tools items={[t("point", "Point"), t("line", "Line"), t("plane", "Plane")]} /></Cells>
            </Group>
            <Group $lead={52}>
              <Grip />
              <Cells><Tools items={[t("dimOff", "Constraints Dialog"), t("dim", "Constraint")]} /></Cells>
            </Group>
            <Group $lead={30} $tail={71}>
              <Grip />
              <Cells><Tools items={[t("stock", "Create Stock")]} /></Cells>
            </Group>
          </ToolBar>

          <Work>
            <SideBar>
              <SideGrip />
              <Tools place="left" items={dressUp} />
              <SideGrip $lead={52} />
              <Tools place="left" items={[t("translate", "Translation", true)]} />
              <SideRule />
              <Tools place="left" items={[t("mirror", "Mirror"), t("pattern", "Rectangular Pattern", true)]} />
              <SideRule />
              <Tools place="left" items={[t("scale", "Scaling", true)]} />
            </SideBar>
            <ScrollBar>
              <ScrollButton aria-label="Scroll up"><svg width="8" height="6"><path d="M0 6l4-6 4 6z" fill="#0a0c38" /></svg></ScrollButton>
              <Thumb />
              <ScrollButton $end aria-label="Scroll down"><svg width="8" height="6"><path d="M0 0l4 6 4-6z" fill="#0a0c38" /></svg></ScrollButton>
            </ScrollBar>

            <Canvas>
              <Tree>
                {nodes.map((n) => (
                  <Node key={n.name}>
                    <Spine>
                      {n.open && (
                        <Toggle aria-label={`Expand ${n.name}`}>
                          <svg width="11" height="11"><path d="M5.500 0v11M0 5.500h11" stroke="#050508" strokeWidth="3" /></svg>
                        </Toggle>
                      )}
                    </Spine>
                    <Stub $long={!n.open} />
                    <NodeIcon $dim={n.dim}>
                      <svg width="24" height="24" viewBox="0 0 24 24" fill="none" aria-hidden="true">{treeArt[n.icon]}</svg>
                    </NodeIcon>
                    <NodeLabel $shade={n.open}>{n.name}</NodeLabel>
                  </Node>
                ))}
              </Tree>
              <Wing />
              <Pointer width="11" height="19" viewBox="0 0 11 19">
                <path d="M1 1v14l3-3 3 6 2-1-2-6h4z" fill="#fff" stroke="#14141c" />
              </Pointer>

              <Palette>
                <PaletteTitle>
                  S...
                  <PaletteClose aria-label="Close palette">
                    <svg width="8" height="8"><path d="M1 1l6 6M7 1 1 7" stroke="#fff" strokeWidth="2" /></svg>
                  </PaletteClose>
                </PaletteTitle>
                <PaletteBody>
                  <PaletteGrip $after={2} />
                  <Tools items={[t("thickSurface", "Thick Surface", true)]} />
                </PaletteBody>
              </Palette>

              <Compass width="80" height="88" viewBox="1140 73 80 88" fontFamily="Open Sans, sans-serif" fontSize="12">
                <path d="M1169 92Q1194 95 1197 119L1169 123z" fill="#1c4f66" stroke="#dcdcf4" strokeWidth="1.500" />
                <path d="M1169 92Q1179 105 1181 130L1168 123z" fill="#12144c" stroke="#dcdcf4" strokeWidth="1.500" />
                <path d="M1146 146Q1168 141 1182 143 1192 146 1191 150 1185 155 1160 154z" fill="#14505c" stroke="#dcdcf4" strokeWidth="1.500" />
                <path d="M1162 145h10v7h-10z" fill="#ee1410" />
                <path d="M1167.500 86V145" stroke="#d8c4ee" strokeWidth="2" />
                <circle cx="1167.500" cy="84.500" r="3" fill="#ddd0f4" />
                <g fill="#f2ec62"><text x="1175" y="87">z</text><text x="1205" y="122">y</text><text x="1190" y="133">x</text></g>
              </Compass>
              <Axes width="30" height="40" viewBox="1212 572 30 40" fontFamily="Open Sans, sans-serif" fontSize="12" fill="#ececf6">
                <path d="M1218 589V602L1226 606M1218 602h13" stroke="#ececf6" fill="none" />
                <text x="1217" y="588">z</text><text x="1232" y="601">y</text><text x="1225" y="608">x</text>
              </Axes>
            </Canvas>

            <SideBar $right>
              <SideGrip />
              <Tools place="right" items={[t("gearLeaf", "Part Design")]} />
              <SideGrip $lead={8} $after={7} />
              <Tools place="right" items={[t("select", "Select", true)]} />
              <SideGrip $lead={6} $after={6} />
              <Tools place="right" items={[t("sketch", "Sketcher", true)]} />
              <SideGrip $lead={6} $after={6} />
              <Tools place="right" items={[t("flagText", "Text with Leader", true), t("flagNote", "Flag Note", true), t("datum", "Create Datum")]} />
              <SideGrip $lead={16} $after={6} />
              <Tools place="right" items={sketchBased} />
            </SideBar>
          </Work>

          <BottomBar>
            <Group>
              <Grip />
              <Cells><Tools items={[t("fileNew", "New"), t("open", "Open"), t("save", "Save"), t("print", "Quick Print"), t("cut", "Cut"), t("copy", "Copy"), t("paste", "Paste"), t("undo", "Undo", true), t("redo", "Redo", true), t("help", "What's This?")]} /></Cells>
            </Group>
            <Group $lead={11}>
              <Grip />
              <Cells><Tools place="wideBar" items={[t("enovia", "ENOVIA Connect"), t("catalog", "Catalog"), t("box", "Open Package"), t("gearLeaf", "Workbench"), t("gears", "Assembly")]} /></Cells>
            </Group>
            <Group $lead={16}>
              <Grip />
              <Cells><Tools items={[t("fly", "Fly Mode"), t("fit", "Fit All In"), t("pan", "Pan"), t("rotate", "Rotate"), t("zoomIn", "Zoom In"), t("zoomOut", "Zoom Out"), t("normal", "Normal View"), t("multi", "Create Multi-View"), t("iso", "Isometric View", true), t("shading", "Shading", true), t("hideShow", "Hide/Show"), t("swap", "Swap Visible Space")]} /></Cells>
            </Group>
            <Group $lead={18}>
              <Grip />
              <Cells><Tools items={[t("camera", "Capture")]} /></Cells>
            </Group>
            <Group $lead={10}>
              <Grip />
              <Cells>
                <Tools items={[t("update", "Update All"), t("manual", "Manual Update"), t("axis", "Axis System"), t("mean", "Mean Dimensions"), t("cutPart", "Cut Part by Sketch Plane", true), t("link", "Create Links"), t("stack", "Scan", true), t("book", "Only Current Body")]} />
                <Combo label="In work object" value="PartBody" width={152} boxed />
              </Cells>
            </Group>
            <Logo width="58" height="30" viewBox="1216 624 58 30">
              <path d="M1221 628v13M1218 631l3-3 3 3M1218 634l3-2 3 2" stroke="#f8f8ff" strokeWidth="1.500" fill="none" />
              <path d="M1240 625q9-1 8 3-1 3-6 3" stroke="#d83c34" strokeWidth="2" fill="none" />
              <path d="M1238 631q6 0 4 6-2 5-8 5l4-9" stroke="#343c9c" strokeWidth="2.500" fill="none" />
              <path d="M1254 632q-7-1-6 3l5 3q0 5-8 4" stroke="#f0a428" strokeWidth="2.500" fill="none" />
              <text x="1240" y="651" fontFamily="Liberation Sans" fontSize="9" fontWeight="700" fontStyle="italic" fill="#343c9c">CATIA</text>
            </Logo>
          </BottomBar>

          <Status>
            <span>Select an object or a command</span>
            <CommandLine aria-label="Command line" />
            <StatusButton aria-label="Command list">
              <svg width="16" height="14" fill="none" stroke="#8a8a98"><path d="M1 1h14v11H1z" fill="#dcdcea" /><circle cx="8" cy="6.500" r="4" /><path d="M8 4v5M6 9h4" /></svg>
            </StatusButton>
            <Tip role="tooltip">
              Durga pg 1stbalcony
              <em>Internet access</em>
            </Tip>
          </Status>
        </Screen>
      </Page>
    </>
  );
}
